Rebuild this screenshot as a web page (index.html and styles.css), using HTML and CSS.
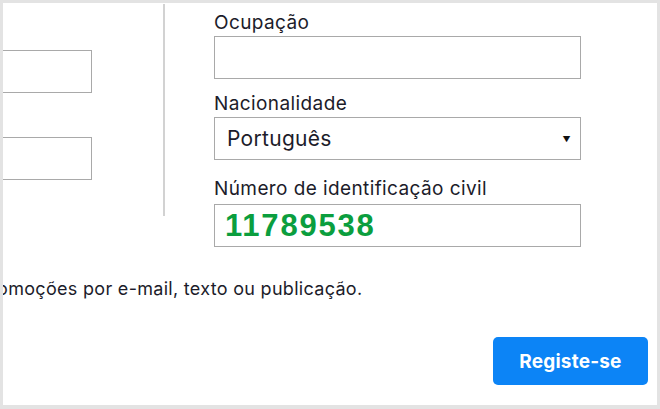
FILE: index.html
```html
<!DOCTYPE html>
<html>
  <head>
    <link rel="stylesheet" href="styles.css">
  </head>

  <body>
    <div class="panel">
      <div class="cols">
        <div class="col-left">
          <input type="text" class="box" />
          <input type="text" class="box" />
        </div>

        <div class="divider"></div>

        <div class="col-right">
          <div class="field">
            <label for="job">Ocupação</label>
            <input type="text" id="job" class="box" />
          </div>
          <div class="field field-nat">
            <label for="nat">Nacionalidade</label>
            <div class="select" id="nat">
              <span>Português</span>
              <span class="arrow">&#9660;</span>
            </div>
          </div>
          <div class="field field-id">
            <label for="idnum">Número de identificação civil</label>
            <div class="box id-box" id="idnum">11789538</div>
          </div>
        </div>
      </div>

      <p class="consent">promoções por e-mail, texto ou publicação.</p>

      <div class="actions">
        <button class="submit">Registe-se</button>
      </div>
    </div>
  </body>
</html>
```

FILE: styles.css
```css
html,
body {
  margin: 0;
  padding: 0;
}

body {
  background-color: #e3e3e3;
  font-family: Inter, Lato, "Liberation Sans", sans-serif;
  color: #1c1c2a;
}

.panel {
  margin: 3px 3px 4px 3px;
  height: 402px;
  background-color: #fff;
  overflow: hidden;
}

.cols {
  display: flex;
  height: 213px;
}

.col-left {
  width: 160px;
  flex-shrink: 0;
  display: flex;
  flex-direction: column;
  align-items: flex-end;
  padding-top: 47px;
  gap: 44px;
}

.col-left .box {
  width: 200px;
  margin-right: 71px;
}

.box {
  box-sizing: border-box;
  height: 43px;
  border: 1px solid #a9a9a9;
  background: #fff;
  margin: 0;
  padding: 0;
}

.divider {
  width: 2px;
  flex-shrink: 0;
  margin-top: 1px;
  background-color: #d2d2d2;
}

.col-right {
  width: 367px;
  padding-left: 49px;
  padding-top: 9px;
}

.field label {
  display: block;
  font-size: 19px;
  line-height: 22px;
  letter-spacing: 0.4px;
  margin-bottom: 2px;
}

.field .box,
.field .select {
  width: 100%;
}

.field-nat {
  margin-top: 14px;
}

.field-id {
  margin-top: 18px;
}

.field-id label {
  margin-bottom: 4px;
}

.select {
  box-sizing: border-box;
  height: 43px;
  border: 1px solid #a9a9a9;
  display: flex;
  align-items: center;
  justify-content: space-between;
  padding: 0 9px 0 12px;
  font-size: 21px;
  letter-spacing: 0.3px;
}

.arrow {
  font-size: 8px;
  color: #111;
}

.id-box {
  display: flex;
  align-items: center;
  padding-left: 10px;
  font-family: "Liberation Sans", Arial, sans-serif;
  font-weight: bold;
  font-size: 31px;
  letter-spacing: 1.8px;
  color: #0b9e3e;
}

.consent {
  margin: 62px 0 0 -24px;
  font-size: 18px;
  letter-spacing: 0.3px;
  white-space: nowrap;
}

.actions {
  display: flex;
  justify-content: flex-end;
  padding-right: 9px;
  margin-top: 38px;
}

.submit {
  width: 155px;
  height: 48px;
  border: none;
  border-radius: 5px;
  background-color: #0c84f6;
  color: #fff;
  font-family: Inter, "Liberation Sans", sans-serif;
  font-weight: bold;
  font-size: 19px;
  letter-spacing: 0.2px;
  cursor: pointer;
}
```
